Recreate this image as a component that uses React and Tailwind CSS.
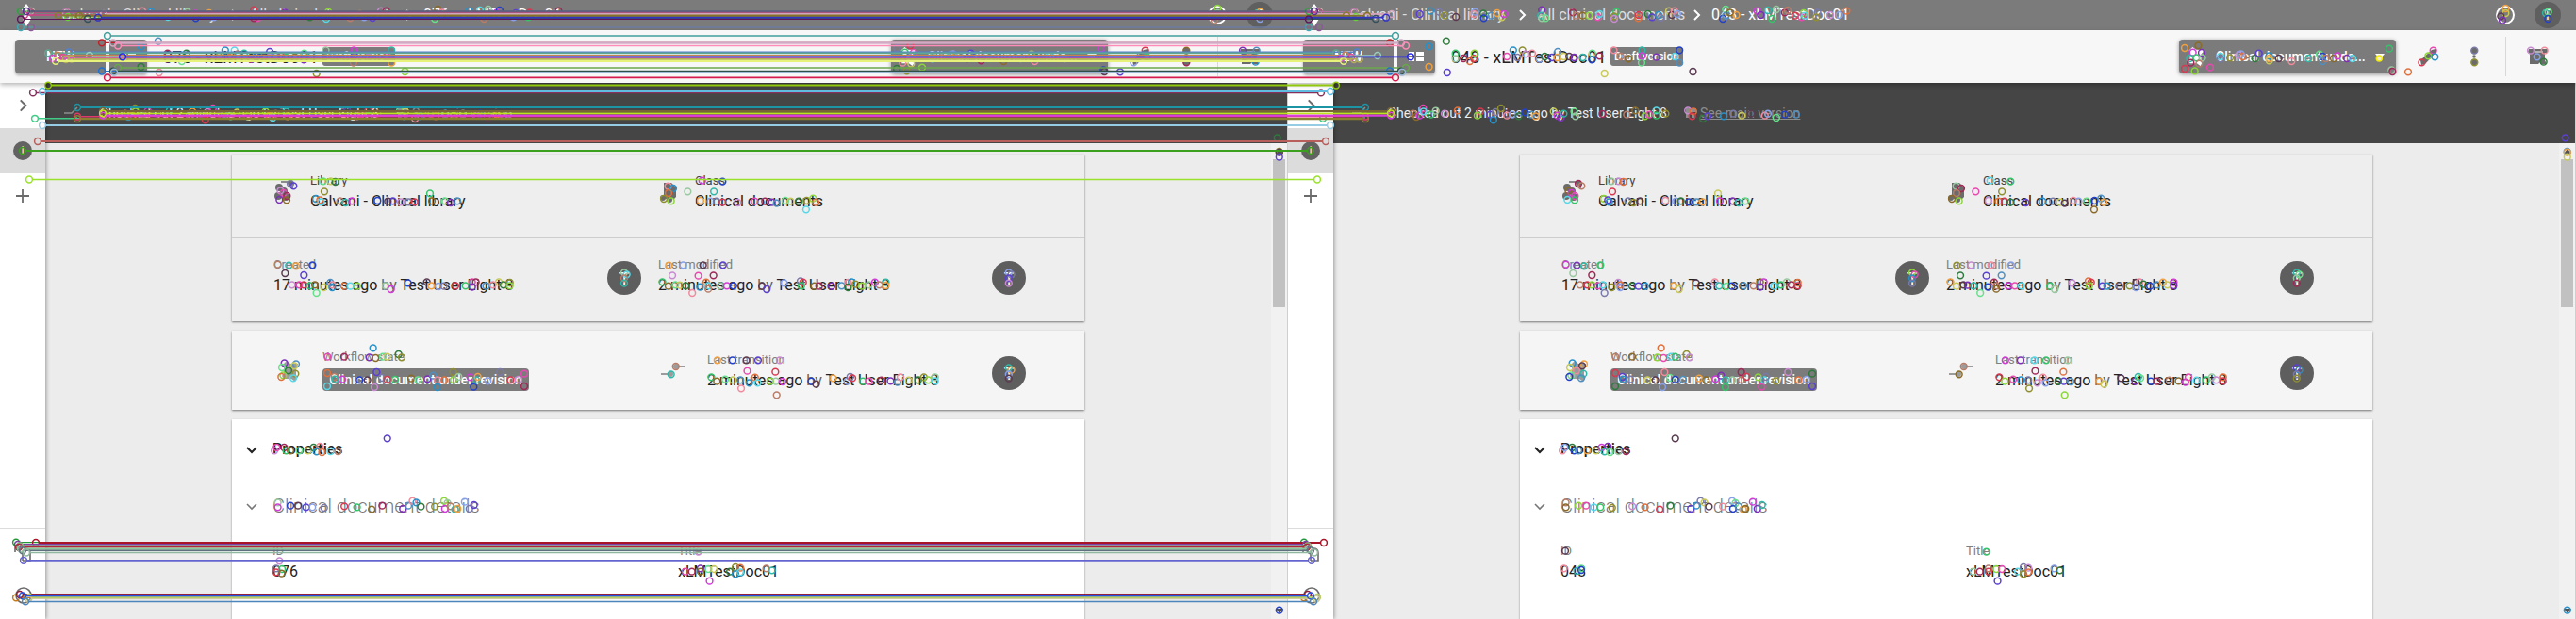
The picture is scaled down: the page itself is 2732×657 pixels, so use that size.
import React from "react";

const PANEL = 1366;

/* ---------- icons ---------- */
const Chevron = ({ className, d = "M6 3l5 5-5 5", w = 2 }) => (
  <svg className={className} viewBox="0 0 16 16" fill="none" stroke="currentColor" strokeWidth={w}>
    <path d={d} />
  </svg>
);

const LogoIcon = () => (
  <svg className="h-6 w-3 shrink-0" viewBox="0 0 12 24" fill="#fff">
    <path d="M6 0l5 7-2 4 2 5-5 8-4-7 2-6-3-5z" />
  </svg>
);

const FlowIcon = ({ className }) => (
  <svg className={className} viewBox="0 0 24 24" fill="currentColor">
    <path d="M8 1l4 3h8v3l-2 2v7l2 2-3 5-4-3H5l-2-3 2-3V8L4 5z" />
  </svg>
);

const LibraryIcon = () => (
  <svg className="h-6 w-6 shrink-0 text-[#6b6b6b]" viewBox="0 0 24 24" fill="currentColor">
    <circle cx="6" cy="9" r="4" />
    <circle cx="11" cy="13" r="4" />
    <circle cx="5" cy="18" r="4" />
    <circle cx="13" cy="19" r="4" />
    <path d="M8 3h12v8" fill="none" stroke="currentColor" strokeWidth="1.5" />
    <circle cx="18" cy="4" r="3" />
  </svg>
);

const ClassIcon = () => (
  <svg className="h-6 w-6 shrink-0 text-[#6b6b6b]" viewBox="0 0 24 24" fill="currentColor">
    <path d="M6 1h8l5 5v10l-2 2H8l-2-3z" />
    <circle cx="5" cy="17" r="3" />
    <circle cx="12" cy="19" r="3" />
  </svg>
);

const TransitionIcon = () => (
  <svg className="h-4 w-7 shrink-0 text-[#9b9b9b]" viewBox="0 0 28 16" fill="currentColor">
    <circle cx="17" cy="4" r="3" />
    <circle cx="11" cy="12" r="3" />
    <path d="M17 3h10v2H17zM1 11h10v2H1z" />
  </svg>
);

const BranchIcon = () => (
  <svg className="h-4 w-5 shrink-0 text-[#8d8d8d]" viewBox="0 0 20 16" fill="none" stroke="currentColor" strokeWidth="1.6">
    <path d="M0 8h8l6-6M14 13h-2" />
  </svg>
);

const Avatar = () => (
  <div className="flex h-9 w-9 shrink-0 items-center justify-center rounded-full bg-[#5e5e5e] text-[18px] text-white">T</div>
);

/* ---------- application panel ---------- */
const Field = ({ label, value, dark, className = "" }) => (
  <div className={className}>
    <div className={dark ? "text-[13px] leading-[20px] text-[#444]" : "text-[13px] leading-[20px] text-[#808080]"}>{label}</div>
    <div className="text-[16px] leading-[23px] whitespace-nowrap text-[#222]">{value}</div>
  </div>
);

const ByUser = ({ time }) => (
  <>
    {time} <span className="text-[#666]">by</span> Test User Eight 8
  </>
);

function Panel({ id }) {
  return (
    <section className="flex h-[657px] w-[1366px] shrink-0 flex-col overflow-hidden bg-[#ececec]">
      <header className="flex h-8 shrink-0 items-center bg-[#7b7b7b] pl-[22px] pr-4 text-[16px] text-white">
        <LogoIcon />
        <span className="ml-[31px] w-[168px] whitespace-nowrap text-[#dedede]">Galvani - Clinical library</span>
        <Chevron className="ml-[7px] h-4 w-4" />
        <span className="ml-[9px] w-[152px] whitespace-nowrap text-[#dedede]">All clinical documents</span>
        <Chevron className="ml-2 h-4 w-4" />
        <span className="ml-2 whitespace-nowrap">{id} - xLMTestDoc01</span>
        <div className="ml-auto h-5 w-5 rounded-full border-2 border-white" />
        <div className="ml-[21px] flex h-7 w-7 items-center justify-center rounded-full bg-[#5f5f5f] text-[14px]">T</div>
      </header>

      <div className="z-10 flex h-14 shrink-0 items-center bg-[#f7f7f7] pl-4 shadow-[0_2px_5px_rgba(0,0,0,0.3)]">
        <div className="flex shrink-0 gap-1 rounded shadow-[0_2px_3px_rgba(0,0,0,0.3)]">
          <div className="flex h-9 w-24 items-center justify-center rounded-l bg-[#7b7b7b] text-[14px] font-medium text-white">NEW</div>
          <div className="flex h-9 w-10 items-center justify-center rounded-r bg-[#7b7b7b] text-white">
            <svg className="h-3 w-4" viewBox="0 0 16 12" fill="currentColor">
              <path d="M0 1h6v4H0zM8 1h8v4H8zM0 7h6v4H0zM8 7h8v4H8z" />
            </svg>
          </div>
        </div>
        <h1 className="ml-[17px] w-[169px] shrink-0 text-[18px] font-normal whitespace-nowrap text-[#222]">{id} - xLMTestDoc01</h1>
        <span className="flex h-5 w-[77px] shrink-0 items-center justify-center rounded-[3px] bg-[#7b7b7b] text-[12px] font-medium whitespace-nowrap text-white">Draft version</span>
        <div className="ml-[526px] flex h-9 w-[230px] shrink-0 items-center rounded-sm bg-[#7b7b7b] pl-[7px] text-white shadow-[0_1px_4px_rgba(0,0,0,0.4)]">
          <FlowIcon className="h-[22px] w-[22px]" />
          <span className="ml-[10px] w-[164px] text-[14px] font-medium whitespace-nowrap">Clinical document unde...</span>
          <svg className="ml-[5px] h-[6px] w-[10px]" viewBox="0 0 10 6" fill="#fff">
            <path d="M0 0h10L5 6z" />
          </svg>
        </div>
        <div className="flex h-full shrink-0 items-center text-[#6b6b6b]">
          <svg className="ml-[23px] h-6 w-6" viewBox="0 0 24 24" fill="currentColor">
            <path d="M3 16L15 5l4-1v4L8 20l-4 1z" />
          </svg>
          <svg className="ml-[24px] h-6 w-6" viewBox="0 0 24 24" fill="currentColor">
            <circle cx="12" cy="6" r="3.4" />
            <circle cx="12" cy="12" r="1.8" />
            <circle cx="12" cy="18" r="3.4" />
          </svg>
          <div className="ml-[21px] h-[42px] w-px bg-[#d8d8d8]" />
          <svg className="ml-[22px] h-6 w-6" viewBox="0 0 24 24" fill="currentColor">
            <path d="M2 4h20v4h-3v8l2 4h-7v-2l-2 2H3V9L1 7z" />
            <path d="M8 7h9" stroke="#f7f7f7" />
          </svg>
        </div>
      </div>

      <div className="flex min-h-0 flex-1">
        <nav className="z-[5] flex w-12 shrink-0 flex-col items-center bg-white text-[#6b6b6b] shadow-[1px_0_4px_rgba(0,0,0,0.35)]">
          <div className="flex h-12 items-center">
            <Chevron className="h-[18px] w-[18px]" w={1.8} />
          </div>
          <div className="flex h-12 w-12 items-center justify-center bg-[#dcdcdc]">
            <div className="flex h-5 w-5 items-center justify-center rounded-full bg-[#626262] text-[11px] text-white">i</div>
          </div>
          <div className="flex h-12 items-center">
            <svg className="h-[14px] w-[14px]" viewBox="0 0 14 14" stroke="currentColor" strokeWidth="1.8">
              <path d="M7 0v14M0 7h14" />
            </svg>
          </div>
          <div className="mt-auto flex h-[97px] w-12 flex-col items-center border-t border-[#dcdcdc] pt-[15px]">
            <svg className="h-[22px] w-[22px]" viewBox="0 0 22 22" fill="none" stroke="currentColor" strokeWidth="1.6">
              <path d="M3 10V4M6 4v5M11 19V9l3-3c4 0 5 2 5 5v8h-8" />
            </svg>
            <svg className="mt-[25px] ml-[2px] h-[18px] w-[18px]" viewBox="0 0 18 18" fill="none" stroke="currentColor" strokeWidth="1.6">
              <circle cx="9" cy="9" r="8" />
              <path d="M9 8v6" />
            </svg>
          </div>
        </nav>

        <div className="flex min-w-0 flex-1 flex-col border-r border-[#cfcfcf]">
          <div className="flex h-16 shrink-0 items-center bg-[#454545] pl-5 text-[14px] text-[#ededed]">
            <BranchIcon />
            <span className="ml-[18px] w-[316px] whitespace-nowrap">Checked out 2 minutes ago by Test User Eight 8</span>
            <span className="flex items-center whitespace-nowrap text-[#8d8d8d] underline">
              <svg className="mr-1 h-3 w-[11px]" viewBox="0 0 11 12" fill="currentColor">
                <path d="M0 1h4v10H0zM6 1h5v4H6zM6 7h3v4H6z" />
              </svg>
              See main version
            </span>
          </div>

          <div className="flex min-h-0 flex-1">
            <main className="flex w-[1300px] shrink-0 flex-col gap-[10px] overflow-hidden pt-3 pl-[198px]">
              <div className="h-[177px] w-[904px] shrink-0 bg-[#eeeeee] shadow-[0_1px_2px_rgba(0,0,0,0.5)]">
                <div className="flex h-[89px] border-b border-[#cdcdcd] pt-[18px] pl-[44px]">
                  <div className="flex w-[408px] gap-[15px]">
                    <div className="pt-[8px]"><LibraryIcon /></div>
                    <Field dark label="Library" value="Galvani - Clinical library" />
                  </div>
                  <div className="flex gap-[15px]">
                    <div className="pt-[11px]"><ClassIcon /></div>
                    <Field dark label="Class" value="Clinical documents" />
                  </div>
                </div>
                <div className="flex h-[88px] pl-[44px]">
                  <Field className="w-[354px] pt-[18px]" label="Created" value={<ByUser time="17 minutes ago" />} />
                  <div className="pt-[24px]"><Avatar /></div>
                  <Field className="ml-[18px] w-[354px] pt-[18px]" label="Last modified" value={<ByUser time="2 minutes ago" />} />
                  <div className="pt-[24px]"><Avatar /></div>
                </div>
              </div>

              <div className="flex h-[84px] w-[904px] shrink-0 bg-[#f5f5f5] pl-[50px] shadow-[0_1px_2px_rgba(0,0,0,0.5)]">
                <FlowIcon className="mt-[31px] h-6 w-6 text-[#9b9b9b]" />
                <div className="ml-[22px] w-[358px] pt-[18px]">
                  <div className="text-[13px] leading-[20px] text-[#808080]">Workflow state</div>
                  <div className="mt-[2px] flex h-6 w-[219px] items-center justify-center rounded-sm bg-[#7b7b7b] text-[14px] font-medium whitespace-nowrap text-white">Clinical document under revision</div>
                </div>
                <div className="pt-[34px]"><TransitionIcon /></div>
                <Field className="ml-[22px] w-[302px] pt-[21px]" label="Last transition" value={<ByUser time="2 minutes ago" />} />
                <div className="pt-[27px]"><Avatar /></div>
              </div>

              <div className="h-[300px] w-[904px] shrink-0 bg-white pl-[13px] shadow-[0_1px_2px_rgba(0,0,0,0.4)]">
                <div className="flex h-16 items-center">
                  <Chevron className="h-4 w-4 text-[#222]" d="M3 6l5 5 5-5" />
                  <span className="ml-[14px] text-[16px] font-medium text-[#222]">Properties</span>
                </div>
                <div className="flex h-[56px] items-center">
                  <Chevron className="h-4 w-4 text-[#777]" d="M3 6l5 5 5-5" w={1.6} />
                  <span className="ml-[14px] text-[20px] font-light whitespace-nowrap text-[#777]">Clinical document details</span>
                </div>
                <div className="flex pt-[10px] pl-[30px]">
                  <Field className="w-[430px]" label="ID" value={id} />
                  <Field label="Title" value="xLMTestDoc01" />
                </div>
              </div>
            </main>

            <div className="ml-auto flex w-[17px] flex-col items-center justify-between bg-[#f1f1f1] py-[6px]">
              <svg className="h-[5px] w-2" viewBox="0 0 8 5" fill="#505050"><path d="M4 0l4 5H0z" /></svg>
              <div className="mb-auto mt-[6px] h-[157px] w-[13px] bg-[#c1c1c1]" />
              <svg className="h-[5px] w-2" viewBox="0 0 8 5" fill="#505050"><path d="M0 0h8L4 5z" /></svg>
            </div>
          </div>
        </div>
      </div>
    </section>
  );
}

/* ---------- key points and matches ---------- */
// Each group: origin x, origin y, units per pixel in x and in y, then x,y pairs.
const GROUPS = [
  [0, 0, 2.24, 3, "313,45 338,35 359,38 372,50 399,54 441,45 445,38 464,43 465,58 483,50 497,42 508,55 513,45 603,32 601,50 612,58 603,58 677,40 685,50 700,50 715,50 736,55 740,45 780,38 775,52 775,60 832,58 833,48 855,45 865,55 880,48 885,57 905,35 912,48 918,35 925,45 1040,30 1033,60 1040,50 1065,48 1050,40 1115,35 1123,48 1140,33 1150,60 1160,30 1180,40 1187,33 1205,50 1225,42 1220,55 1228,50 1258,40 1255,55 1288,48 1327,35 1310,48"],
  [0, 0, 2.24, 3, "376,131 378,231 335,148 335,213 752,234 962,228 774,160 841,160 840,200 930,160 930,200 790,180 809,187 841,178 875,182 919,180 398,170 398,187 417,186 432,195 441,186 443,170 520,180 535,160 545,183 557,160 565,172 580,170 597,188 610,180 627,183 641,165 640,183 655,180 668,180 680,183 700,183 723,170 722,190 740,178"],
  [0, 0, 2.24, 3, "297,362 305,372 313,368 321,345 322,355 340,365 351,353 372,362 403,352 457,355 450,368 480,365 488,382 493,357 506,345 520,362 520,368 533,365 548,370 563,358 578,365 588,370 631,355 640,368 648,375 655,362 680,355 683,370 747,363 805,365 825,352 848,370 858,365 875,352 875,368 897,362 950,352 963,355 960,370 986,378 997,370 1035,370 1058,362 1078,368 1100,362 1133,368 1140,362 1160,375 1180,365 1207,365"],
  [914, 0, 3, 3, "111,153 154,145 137,167 165,168 127,186 148,184 167,184 130,200 157,203 111,219 143,226 192,215 225,180 225,187 255,184 283,175 296,180 290,172 335,186 347,170 380,178 380,186 380,193 410,186 451,195 505,186 540,173 550,180 550,195 560,186 585,186 597,178 627,186 645,186 762,155 769,223 772,228 822,229 865,199 886,178 902,161 907,181 1033,161 1033,199 1212,161 1256,161 1232,181 1253,197 1322,439 1328,483 1132,27 1132,42 1117,52 1122,65 1260,42 1268,38 1267,60"],
  [234, 150, 3, 3, "222,135 232,142 190,157 200,165 211,174 187,186 210,187 326,127 350,127 365,129 330,160 303,183 316,187 320,193 380,190 397,195 418,190 499,189 532,191 548,190 573,193 598,193 617,193 666,166 672,190 713,190 732,195 753,190 1424,143 1440,150 1425,165 1410,183 1433,190 1486,160"],
  [680, 150, 2.178, 3, "141,125 188,128 168,160 137,189 160,191 174,191 188,194 223,195 262,191 286,191 302,194 313,197 333,189 345,191 364,191 382,189 397,182 403,194 381,217"],
  [234, 150, 3, 3, "182,392 217,395 240,397 292,394 205,420 265,426 227,457 250,457 265,457 284,460 300,457 305,483 328,465 349,450 355,457 355,465 393,461 413,461 434,461 525,460 542,471 596,451 656,448 670,460 693,462 710,461 747,460 779,460 800,448 812,448 800,464 845,461 866,457 885,448 900,457 920,450 920,460 1284,418 1292,424 1284,436 1284,452"],
  [680, 150, 2.178, 3, "64,395 97,394 143,394 189,394 72,427 132,428 167,427 49,448 63,461 79,457 89,458 103,460 118,483 136,464 150,449 155,460 155,470 183,460 198,460 213,460 279,461 290,471 330,451 368,445 374,449 370,460 400,461 411,461 440,461 463,460 478,450 486,448 478,465 495,455 510,461 526,457 540,449 550,457 565,449 565,459 849,418 855,424 849,436 849,452"],
  [234, 150, 3, 3, "340,686 393,686 473,688 493,690 516,686 530,686 566,678 576,688 485,658 339,738 339,780 362,750 364,758 387,758 442,760 467,760 496,735 489,783 513,753 530,759 555,759 606,755 628,760 658,757 676,746 690,760 690,783 712,760 740,735 741,760 757,750 794,751 805,782 813,760 818,750 850,763 889,735 922,760 948,759 966,740 966,780 203,706 240,709 195,720 234,715 216,730 238,740 199,745 193,750 231,754"],
  [680, 150, 2.178, 3, "80,717 69,742 176,697 211,697 243,697 270,697 320,697 245,731 310,734 162,751 175,764 194,758 212,760 229,760 231,787 250,769 263,752 269,769 298,764 311,764 327,765 393,764 404,773 443,754 476,764 483,750 488,754 512,764 526,764 555,761 576,763 592,767 599,751 618,761 640,760 653,751 663,760 679,751 679,763 313,808 849,721 855,728 849,742 849,755"],
  [0, 430, 2.24, 3, "920,106 652,145 657,135 675,135 680,145 690,145 711,145 732,145 745,135 760,132 752,148 765,150 785,147 803,147 660,310 660,325 690,320 708,320 727,325 742,325 770,327 818,322 848,325 883,332 908,320 957,330 970,320 980,305 989,310 1000,323 1033,323 1055,305 1063,312 1057,330 1070,322 1081,332 1087,330 1104,308 1115,330 1126,318"],
  [680, 430, 2.178, 3, "132,467 102,530 117,530 137,520 137,530 155,522 168,522 205,530 218,516 218,538 229,518 229,532 289,520 302,526 158,560 1474,653 1474,-805 1474,-790"],
];
const LEFT_ONLY = [0, 430, 2.24, 3, "664,496 656,520 656,532 670,522 669,536"];
const RIGHT_ONLY = [0, 540, 3, 3, "882,134 878,190 920,198 933,190 933,195"];

const COLORS = [
  "#4f8fc0", "#d23ad8", "#35c46a", "#e0703c", "#5b3fd0", "#c9c95a", "#2fb8a8", "#a02858",
  "#8cd63a", "#7a7aa8", "#f08a9c", "#2340c8", "#8a6a28", "#56d8e8", "#c88ad0", "#2f7a3c",
  "#f0a040", "#7c30b8", "#98c8a0", "#d83850", "#2890c8", "#5a3a50", "#66e08a", "#b87c68",
  "#e848b0", "#8f8f30", "#88a0e8",
];

const expand = ([ox, oy, sx, sy, text]) =>
  text.split(" ").map((pair) => {
    const [x, y] = pair.split(",").map(Number);
    return [ox + x / sx, oy + y / sy];
  });

const Ring = ({ x, y, color }) => <circle cx={x} cy={y} r="3.4" fill="none" stroke={color} strokeWidth="1.5" />;

// start x, y, colour, thickness
const MATCHES = [
  [33, 12, "#c4bcae", 1], [33, 13.3, "#a8577c", 1.4], [70, 12.5, "#b070a0", 1], [26, 16, "#d03f86", 1.4],
  [110, 15, "#d2a3bd", 1.6], [72, 18, "#6bd23a", 1], [62, 16.5, "#8a7a2e", 1.6], [84, 16.8, "#857226", 1.6],
  [93, 20, "#33505c", 1.6], [104, 18.7, "#3434c4", 1.6], [22, 20.5, "#5a1858", 1], [22, 12, "#30a040", 1],
  [28, 12, "#5a3090", 1], [22, 29, "#44a8b4", 1], [33, 29, "#8a5a98", 0.6],
  [114, 38, "#3f9f9c", 1.4], [108, 45.3, "#c02028", 1], [120, 45.5, "#d3aac4", 2.4], [125, 48.5, "#ff8cb8", 1.4],
  [73, 55.3, "#5480cc", 1.4], [51, 56.4, "#60a890", 1.4], [95, 59, "#9accc0", 1.2], [61, 58.7, "#c88050", 1],
  [67, 60.8, "#e048a0", 1.6], [56, 62, "#d848c0", 1.4], [76, 62.6, "#b0ad58", 1.6], [70, 63, "#b5ad5a", 1.4],
  [59, 64.8, "#e6f27a", 2], [130, 60.3, "#2a2ae8", 1.6], [125, 72, "#68a84a", 1.3],
  [108, 75.5, "#2070d0", 1], [120, 75.6, "#2c5048", 1.3], [121, 76.6, "#9ab6d8", 0.8], [114, 82.4, "#d6184e", 1.4],
  [51, 90.6, "#92c80c", 1.8], [35, 98.4, "#86305c", 1.3], [45, 97, "#60bce0", 1.8], [82, 114, "#1c94a4", 1.8],
  [37, 125.8, "#40cc86", 1.3], [82, 123.7, "#e23a68", 1.3], [82, 126.2, "#8a8030", 2], [109, 118, "#786436", 2],
  [109, 122.6, "#dc3ce0", 2], [109, 120.3, "#c0e41c", 1.6], [45, 133, "#96cce4", 1.6], [40, 150, "#b85f5c", 1.6],
  [24, 160, "#3aa01e", 1.8], [31, 190.5, "#9ae22a", 1.3],
  [17, 575.6, "#209838", 1], [38, 576, "#a81428", 1.8], [19, 577.8, "#7c40a8", 1.6], [21, 579.3, "#88b478", 1.2],
  [20, 580.8, "#b02838", 1.2], [22, 582.6, "#8cc89c", 2], [24, 584.2, "#607080", 1.4], [28, 586.5, "#90b8a0", 1.2],
  [25, 594.8, "#6464d0", 1.6], [17, 634.3, "#c87818", 1], [21, 631, "#90203c", 1.6], [31, 634, "#b8cc68", 1.6],
  [30, 635.6, "#ccc69a", 0.8], [24, 632.4, "#2452e4", 1.6], [27, 638.4, "#4c84bc", 1.3],
];

function MatchOverlay() {
  const shared = GROUPS.flatMap(expand);
  const left = [...shared, ...expand(LEFT_ONLY)];
  const right = [...shared, ...expand(RIGHT_ONLY)];
  return (
    <svg className="pointer-events-none absolute inset-0 z-20" width="2732" height="657" viewBox="0 0 2732 657">
      {left.map(([x, y], i) => (
        <Ring key={"l" + i} x={x} y={y} color={COLORS[(i * 7 + (i % 5) * 3) % COLORS.length]} />
      ))}
      {right.map(([x, y], i) => (
        <Ring key={"r" + i} x={x + PANEL} y={y} color={COLORS[(i * 11 + (i % 4) * 5 + 4) % COLORS.length]} />
      ))}
      <circle cx={1157.3} cy="62" r="3" fill="#77777733" stroke="#b0c090" strokeWidth="1.2" />
      <circle cx={2523.3} cy="62" r="3" fill="#f8f0c0" stroke="#f0ec10" strokeWidth="1.5" />
      {MATCHES.map(([x, y, color, w], i) => (
        <g key={i}>
          <path d={`M${x + 3} ${y}H${x + PANEL - 3}`} stroke={color} strokeWidth={w + 0.2} />
          <Ring x={x} y={y} color={color} />
          <Ring x={x + PANEL} y={y} color={color} />
        </g>
      ))}
    </svg>
  );
}

export default function App() {
  return (
    <div className="relative flex h-[657px] w-[2732px] overflow-hidden font-['Roboto',sans-serif]">
      <Panel id="076" />
      <Panel id="048" />
      <MatchOverlay />
    </div>
  );
}
